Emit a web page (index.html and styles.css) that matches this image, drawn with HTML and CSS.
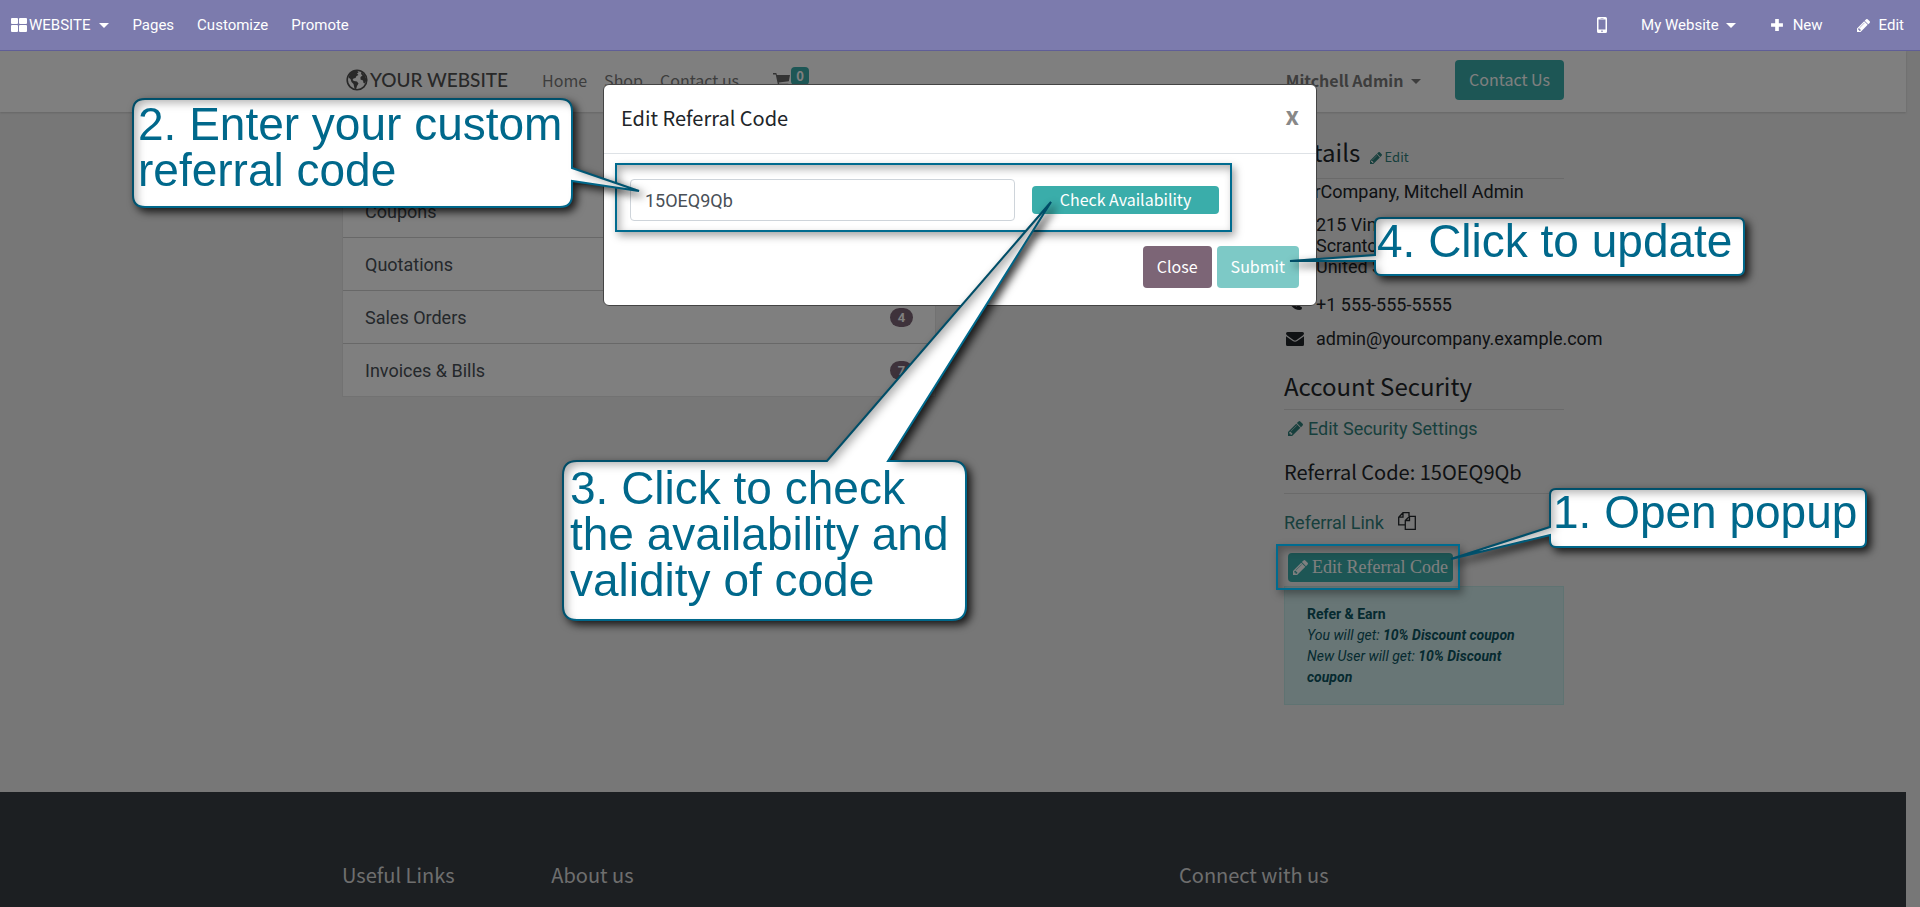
FILE: index.html
```html
<!DOCTYPE html>
<html lang="en">
<head>
<meta charset="utf-8">
<title>My Portal | My Website</title>
<link rel="stylesheet" href="styles.css">
</head>
<body>
<svg class="defs" width="0" height="0" aria-hidden="true">
  <symbol id="pencil" viewBox="128 149 1515 1515"><path d="M491 1536l91-91-235-235-91 91v107h128v128h107zm523-928q0-22-22-22-10 0-17 7l-542 542q-7 7-7 17 0 22 22 22 10 0 17-7l542-542q7-7 7-17zm-54-192l416 416-832 832h-416v-416zm683 96q0 53-37 90l-166 166-416-416 166-165q36-38 90-38 53 0 91 38l235 234q37 39 37 91z"/></symbol>
</svg>

<nav class="topbar">
  <div class="topbar-group">
    <button class="topbar-item brand" type="button">
      <svg width="16" height="16" viewBox="0 0 16 16" fill="currentColor" aria-hidden="true"><rect x="0" y="1" width="7" height="6" rx="1"/><rect x="8" y="1" width="8" height="6" rx="1"/><rect x="0" y="8" width="7" height="7" rx="1"/><rect x="8" y="8" width="8" height="7" rx="1"/></svg>
      WEBSITE <span class="caret"></span>
    </button>
    <a class="topbar-item" href="#">Pages</a>
    <a class="topbar-item" href="#">Customize</a>
    <a class="topbar-item" href="#">Promote</a>
  </div>
  <div class="topbar-group actions">
    <button class="topbar-item" type="button" aria-label="Mobile preview">
      <svg width="10" height="16" viewBox="0 0 10 16" fill="currentColor" aria-hidden="true"><path fill-rule="evenodd" d="M1.5 0h7Q10 0 10 1.5v13Q10 16 8.500 16h-7Q0 16 0 14.500v-13Q0 0 1.500 0ZM1.500 2.500v10h7v-10ZM5 13.400a.8.8 0 1 0 .01 0ZM3.500 1v.6h3V1Z"/></svg>
    </button>
    <button class="topbar-item" type="button">My Website <span class="caret"></span></button>
    <button class="topbar-item icon-item" type="button">
      <svg width="14" height="14" viewBox="0 0 13 13" fill="currentColor" aria-hidden="true"><path d="M4.800 1h3.400v3.800H12v3.400H8.200V12H4.800V8.200H1V4.800h3.800Z"/></svg>
      New
    </button>
    <button class="topbar-item icon-item" type="button">
      <svg width="13" height="13" fill="currentColor" aria-hidden="true"><use href="#pencil"/></svg>
      Edit
    </button>
  </div>
</nav>

<div class="page">
  <header class="site-header">
    <div class="container header-row">
      <a class="logo" href="#">
        <svg width="22" height="22" viewBox="0 0 22 22" aria-hidden="true"><circle cx="11" cy="11" r="9.800" fill="none" stroke="currentColor" stroke-width="1.600"/><path fill="currentColor" d="M4 4.500 L7 2 L11.500 2 L12.500 3.500 L11 4.500 L12.500 6 L10.500 7 L9.500 9 L7.500 9.500 L6.500 11 L8 12 L11 12.500 L12.500 14.500 L11 17 L10 20.500 L8.500 19.500 L7.500 15 L5.500 13 L4.500 10 L2.500 8.500 Z M15.500 3 L19 6.500 L20.500 11 L19 14.500 L17.500 14 L17 11.500 L14.500 10.500 L14.500 8 L16.500 6.500 L15 5 Z"/></svg>
        YOUR WEBSITE
      </a>
      <nav class="main-nav">
        <a href="#">Home</a>
        <a href="#">Shop</a>
        <a href="#">Contact us</a>
        <a class="cart" href="#" aria-label="Cart, 0 items">
          <svg width="17" height="16" viewBox="0 0 17 16" fill="currentColor" aria-hidden="true"><path d="M0 1h3.300l.6 2H17l-1.200 6.300-10 1.200.3 1.300h9.200V13H5L2.700 2.400H0Z"/><circle cx="6" cy="14.500" r="1.500"/><circle cx="14" cy="14.500" r="1.500"/></svg>
          <span class="cart-count">0</span>
        </a>
      </nav>
      <div class="account">
        <button class="user" type="button">Mitchell Admin <span class="caret"></span></button>
        <a class="btn contact" href="#">Contact Us</a>
      </div>
    </div>
  </header>

  <main class="container content">
    <section class="docs">
      <h3>Documents</h3>
      <ul class="doc-list">
        <li><a href="#">Coupons</a></li>
        <li><a href="#">Quotations</a></li>
        <li><a href="#">Sales Orders <span class="pill">4</span></a></li>
        <li><a href="#">Invoices &amp; Bills <span class="pill">7</span></a></li>
      </ul>
    </section>

    <aside class="side">
      <h3 class="ruled details">Details <a class="small-link" href="#"><svg width="12" height="12" fill="currentColor" aria-hidden="true"><use href="#pencil"/></svg>Edit</a></h3>
      <p class="person">YourCompany, Mitchell Admin</p>
      <div class="contact-line address">
        <svg width="18" height="18" viewBox="0 0 18 18" fill="currentColor" aria-hidden="true"><path fill-rule="evenodd" d="M9 1a5 5 0 0 1 5 5c0 3-5 11-5 11S4 9 4 6a5 5 0 0 1 5-5Zm0 3a2 2 0 1 0 .01 0Z"/></svg>
        <address>215 Vine St<br>Scranton PA 18503<br>United States</address>
      </div>
      <div class="contact-line phone">
        <svg width="18" height="18" viewBox="0 0 18 18" fill="currentColor" aria-hidden="true"><path d="M2 4Q2 2 4.500 2L7 6 5.500 8Q7 11 10.500 12.500L12 11l4 2.500Q16 16 13.500 16 9 16 5 11.500 2 8 2 4Z"/></svg>
        <span>+1 555-555-5555</span>
      </div>
      <div class="contact-line mail">
        <svg width="18" height="14" viewBox="0 0 18 14" fill="currentColor" aria-hidden="true"><path d="M1.500 0h15Q18 0 18 1.600 18 2.600 16.800 3.500L10.600 8Q9 9 7.400 8L1.200 3.500Q0 2.600 0 1.600 0 0 1.500 0ZM0 4.300 6.800 9.100Q9 10.500 11.200 9.100L18 4.300v8.200Q18 14 16.500 14h-15Q0 14 0 12.500Z"/></svg>
        <span>admin@yourcompany.example.com</span>
      </div>
      <h3 class="ruled security">Account Security</h3>
      <a class="security-link" href="#"><svg width="15" height="15" fill="currentColor" aria-hidden="true"><use href="#pencil"/></svg>Edit Security Settings</a>
      <h5 class="ruled referral">Referral Code: 15OEQ9Qb</h5>
      <div class="referral-link">
        <a href="#">Referral Link</a>
        <button type="button" aria-label="Copy link">
          <svg width="18" height="18" viewBox="0 0 18 18" fill="none" stroke="currentColor" stroke-width="1.300" aria-hidden="true"><path d="M7 12.800H.700V5.200L5 .700H11V4M5 .700V5.200H.700M7.300 8.500 11.500 4.300H17.300V17.300H7.300ZM11.500 4.300V8.500H7.300"/></svg>
        </button>
      </div>
      <button class="btn edit-code" type="button"><svg width="15" height="15" fill="currentColor" aria-hidden="true"><use href="#pencil"/></svg>Edit Referral Code</button>
      <div class="earn">
        <strong>Refer &amp; Earn</strong>
        <em>You will get: <b>10% Discount coupon</b></em>
        <em>New User will get: <b>10% Discount coupon</b></em>
      </div>
    </aside>
  </main>

  <footer class="site-footer">
    <div class="container footer-cols">
      <h5>Useful Links</h5>
      <h5>About us</h5>
      <h5>Connect with us</h5>
    </div>
  </footer>
</div>

<div class="backdrop">
  <div class="modal" role="dialog" aria-labelledby="modal-title">
    <div class="modal-head">
      <h4 id="modal-title">Edit Referral Code</h4>
      <button class="close" type="button" aria-label="Close dialog">x</button>
    </div>
    <div class="modal-body">
      <input type="text" aria-label="Referral code" value="15OEQ9Qb">
      <button class="btn check" type="button">Check Availability</button>
    </div>
    <div class="modal-foot">
      <button class="btn secondary" type="button">Close</button>
      <button class="btn submit" type="button">Submit</button>
    </div>
  </div>
</div>

<div class="notes">
  <div class="frame frame-form"></div>
  <div class="frame frame-edit"></div>
  <svg class="bubbles" width="1920" height="907" viewBox="0 0 1920 907" aria-hidden="true">
    <defs>
      <filter id="raised" x="-20%" y="-40%" width="140%" height="180%" color-interpolation-filters="sRGB">
        <feFlood flood-color="#000" flood-opacity="0.3"/>
        <feComposite in2="SourceAlpha" operator="out"/>
        <feGaussianBlur stdDeviation="4"/>
        <feOffset dx="5" dy="5"/>
        <feComposite in2="SourceAlpha" operator="in" result="inner"/>
        <feDropShadow in="SourceGraphic" dx="4" dy="4" stdDeviation="4" flood-color="#000" flood-opacity="0.8" result="outer"/>
        <feMerge><feMergeNode in="outer"/><feMergeNode in="inner"/></feMerge>
      </filter>
    </defs>
    <g fill="#fff" stroke="#006b8f" stroke-width="2">
      <path filter="url(#raised)" d="M145 99H560Q572 99 572 111V168L639 191L572 181V195Q572 207 560 207H145Q133 207 133 195V111Q133 99 145 99Z"/>
      <path filter="url(#raised)" d="M577 461H827L1051 202L888 461H952Q966 461 966 475V606Q966 620 952 620H577Q563 620 563 606V475Q563 461 577 461Z"/>
      <path filter="url(#raised)" d="M1381 218H1738Q1744 218 1744 224V269Q1744 275 1738 275H1381Q1375 275 1375 269V261L1290 261L1375 255V224Q1375 218 1381 218Z"/>
      <path filter="url(#raised)" d="M1556 489H1860Q1866 489 1866 495V541Q1866 547 1860 547H1556Q1550 547 1550 541V535L1451 559L1550 527V495Q1550 489 1556 489Z"/>
    </g>
  </svg>
  <p class="note note-open">1. Open popup</p>
  <p class="note note-enter">2. Enter your custom<br>referral code</p>
  <p class="note note-check">3. Click to check<br>the availability and<br>validity of code</p>
  <p class="note note-update">4. Click to update</p>
</div>
</body>
</html>
```

FILE: styles.css
```css
* { box-sizing: border-box; }

body {
  margin: 0;
  background: #eee;
  color: #212529;
  font: 18px/21px Roboto, sans-serif;
}

h3, h4, h5, p, ul { margin: 0; padding: 0; }
h3, h4, h5 { font-family: "Noto Sans CJK SC", sans-serif; font-weight: 400; }
h3 { font-size: 24px; line-height: 32px; }
h5 { font-size: 20px; line-height: 28px; }
a { color: inherit; text-decoration: none; }
button { font: inherit; color: inherit; background: none; border: 0; padding: 0; }
svg { flex: none; }
.defs { position: absolute; }

.caret {
  display: inline-block;
  margin-left: 7px;
  border: 5px solid transparent;
  border-top-color: currentColor;
  border-bottom: 0;
  vertical-align: 3px;
}

/* editor bar */
.topbar {
  position: relative;
  z-index: 3;
  display: flex;
  justify-content: space-between;
  height: 51px;
  padding: 0 16px 0 11px;
  background: #7c7bad;
  border-bottom: 1px solid #5f5e97;
  color: #fff;
  font-size: 15px;
}
.topbar-group { display: flex; align-items: center; gap: 23px; }
.topbar-item { display: flex; align-items: center; }
.brand { gap: 2px; }
.actions { gap: 34px; }
.icon-item { gap: 9px; }

/* page */
.page { margin-right: 14px; }
.container { max-width: 1222px; margin: 0 auto; }
.site-header { background: #fff; box-shadow: 0 1px 2px rgba(0, 0, 0, .15); }
.header-row {
  display: flex;
  align-items: center;
  height: 61px;
  padding-bottom: 3px;
  font: 16px/24px "Noto Sans CJK SC", sans-serif;
  color: #7a7a7a;
}
.logo {
  display: flex;
  align-items: center;
  gap: 2px;
  margin-left: 4px;
  color: #505050;
  font: 500 19px/24px Lato, sans-serif;
}
.main-nav { display: flex; gap: 17px; margin-left: 34px; }
.cart { display: flex; align-items: center; gap: 1px; margin-left: 17px; color: #666; }
.cart-count {
  align-self: flex-start;
  width: 18px;
  margin-top: -1px;
  border-radius: 4px;
  background: #3aadaa;
  color: #fff;
  font: 700 13px/18px "Noto Sans CJK SC", sans-serif;
  text-align: center;
}
.account { display: flex; align-items: center; gap: 34px; margin-left: auto; }
.user { font-weight: 700; }
.user .caret { margin-left: 4px; }
.btn {
  border-radius: 4px;
  background: #3aadaa;
  color: #fff;
  font: 16px/24px "Noto Sans CJK SC", sans-serif;
  text-align: center;
}
.contact { padding: 7px 14px 9px; }

.content { display: flex; justify-content: space-between; padding: 24px 0 87px; }
.docs { width: 594px; }
.docs h3 { margin-bottom: 16px; }
.doc-list { list-style: none; background: #fff; border: 1px solid #e4e4e4; }
.doc-list li { border-bottom: 1px solid #d0d0d0; }
.doc-list li:last-child { border-bottom: 0; }
.doc-list a { display: flex; align-items: center; justify-content: space-between; padding: 16px 22px 15px; color: #495057; }
.pill {
  width: 23px;
  margin: -1px 0;
  border-radius: 12px;
  background: #7c6576;
  color: #fff;
  font-size: 13px;
  line-height: 19px;
  font-weight: 700;
  text-align: center;
}

.side { width: 280px; }
.ruled { padding-bottom: 7px; border-bottom: 1px solid #d4d4d4; }
.details { padding-bottom: 5px; }
.small-link { margin-left: 4px; color: #2f7f7a; font-size: 13px; }
.small-link svg { margin-right: 3px; vertical-align: -2px; }
.person { margin-top: 1px; line-height: 24px; }
.contact-line { display: flex; gap: 12px; margin-left: 2px; white-space: nowrap; }
.address { margin-top: 10px; }
.address address { font-style: normal; }
.phone { margin-top: 17px; }
.mail { align-items: center; margin-top: 13px; }
.security { margin-top: 21px; }
.security-link { display: flex; align-items: center; gap: 5px; margin: 8px 0 0 4px; color: #2f7f7a; }
.referral { margin-top: 19px; }
.referral-link { display: flex; align-items: center; gap: 14px; margin: 18px 0 20px; color: #2f7f7a; }
.referral-link button { height: 21px; color: #212529; }
.edit-code {
  display: flex;
  align-items: center;
  gap: 4px;
  margin-left: 4px;
  padding: 4px 5px;
  font: 18px/21px "Liberation Serif", serif;
}
.earn {
  margin-top: 4px;
  padding: 17px 22px 16px;
  border: 1px solid #bfe6e5;
  background: #d0eded;
  color: #0c5460;
  font-size: 14px;
}
.earn > * { display: block; }

.site-footer { min-height: 115px; background: #383e45; color: #ddd; }
.footer-cols { display: grid; grid-template-columns: 1fr 3fr 385px; padding-top: 69px; }

/* dialog */
.backdrop { position: fixed; inset: 0; z-index: 2; background: rgba(0, 0, 0, .5); }
.modal {
  width: 714px;
  margin: 84px auto 0;
  border: 1px solid #444;
  border-radius: 6px;
  background: #fff;
}
.modal-head { display: flex; justify-content: space-between; padding: 18px 17px 20px; border-bottom: 1px solid #dee2e6; }
.modal-head h4 { font-size: 20px; line-height: 30px; }
.close { height: 24px; color: #888; font: 700 24px/20px "Noto Sans CJK SC", sans-serif; }
.modal-body { display: flex; align-items: center; gap: 17px; padding: 25px 97px 25px 26px; }
.modal-body input {
  flex: 1;
  min-width: 0;
  height: 42px;
  padding: 0 14px;
  border: 1px solid #ced4da;
  border-radius: 4px;
  color: #495057;
  font: 18px/24px Roboto, sans-serif;
}
.check { width: 187px; height: 28px; padding-bottom: 2px; }
.modal-foot { display: flex; justify-content: flex-end; gap: 5px; padding: 0 17px 17px; }
.modal-foot .btn { padding: 8px 14px 10px; }
.modal-foot .secondary { background: #7c6576; }
.modal-foot .submit { background: #7dc9c6; }

/* annotations drawn over the screen */
.notes { position: absolute; top: 0; left: 0; z-index: 4; pointer-events: none; }
.bubbles { position: absolute; top: 0; left: 0; }
.frame {
  position: absolute;
  border: 2px solid #006b8f;
  box-shadow: 3px 4px 8px rgba(0, 0, 0, .35), inset 3px 4px 8px rgba(0, 0, 0, .3);
}
.frame-form { left: 615px; top: 163px; width: 617px; height: 69px; }
.frame-edit { left: 1276px; top: 544px; width: 184px; height: 46px; }
.note {
  position: absolute;
  color: #00688b;
  font: 46px/46px "Liberation Sans", sans-serif;
  white-space: nowrap;
}
.note-open { left: 1553px; top: 489px; }
.note-enter { left: 138px; top: 101px; }
.note-check { left: 570px; top: 465px; }
.note-update { left: 1377px; top: 218px; }
```
